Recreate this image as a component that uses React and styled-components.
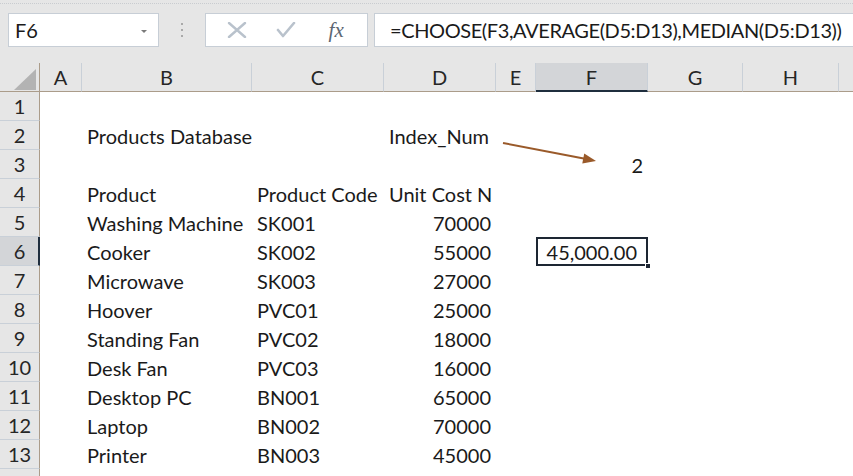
import React from "react";
import styled, { createGlobalStyle, css } from "styled-components";

const GlobalStyle = createGlobalStyle`
  *, *::before, *::after { box-sizing: border-box; }
  html, body { margin: 0; padding: 0; background: #ffffff; overflow: hidden; }
  body { font-family: "Lato", "Open Sans", sans-serif; color: #1a1a1a; }
`;

const FONT = `"Lato", "Open Sans", sans-serif`;
const COLS = "40px 42px 170px 132px 112px 40px 112px 95px 96px 1fr";

const Window = styled.div`
  width: 853px;
  height: 476px;
  overflow: hidden;
  display: flex;
  flex-direction: column;
  background: #ffffff;
`;

const Toolbar = styled.div`
  height: 63px;
  flex: none;
  background: #e6e6e6;
  display: flex;
  flex-direction: column;
  overflow: hidden;
`;

const DottedRule = styled.div`
  margin-top: 3px;
  height: 0;
  border-top: 1px dotted #c9ccd0;
`;

const BarRow = styled.div`
  margin-top: 9px;
  height: 34px;
  display: flex;
  align-items: stretch;
  padding-left: 8px;
`;

const NameBox = styled.div`
  width: 151px;
  flex: none;
  background: #ffffff;
  border: 1px solid #c7ced6;
  display: flex;
  align-items: center;
  justify-content: space-between;
  padding: 0 11px 0 6px;
  font-family: ${FONT};
  font-size: 20px;
  color: #1a1a1a;
`;

const DropArrow = styled.span`
  width: 0;
  height: 0;
  border-left: 3px solid transparent;
  border-right: 3px solid transparent;
  border-top: 3px solid #7a7a7a;
  margin-top: 2px;
`;

const Grip = styled.div`
  width: 46px;
  flex: none;
  display: flex;
  flex-direction: column;
  align-items: center;
  justify-content: center;
  gap: 4px;
`;

const GripDot = styled.span`
  width: 2px;
  height: 2px;
  background: #a9a9a9;
`;

const FuncBox = styled.div`
  width: 163px;
  flex: none;
  background: #ffffff;
  border: 1px solid #c7ced6;
  display: flex;
  align-items: center;
  justify-content: space-around;
  padding: 0 6px;
`;

const IconSlot = styled.span`
  width: 22px;
  height: 22px;
  display: flex;
  align-items: center;
  justify-content: center;
`;

const Fx = styled.span`
  font-family: "Liberation Serif", "DejaVu Serif", serif;
  font-style: italic;
  font-size: 21px;
  color: #5c6672;
  line-height: 1;
`;

const FormulaBox = styled.div`
  flex: 1;
  margin-left: 6px;
  margin-right: -2px;
  background: #ffffff;
  border: 1px solid #c7ced6;
  display: flex;
  align-items: center;
  padding-left: 15px;
  font-family: ${FONT};
  font-size: 20px;
  letter-spacing: -0.4px;
  color: #1a1a1a;
  white-space: nowrap;
  overflow: hidden;
`;

const Sheet = styled.div`
  position: relative;
  flex: 1;
  display: flex;
  flex-direction: column;
  font-family: ${FONT};
  font-size: 20px;
`;

const Row = styled.div`
  display: grid;
  grid-template-columns: ${COLS};
  height: 29px;
  flex: none;
`;

const HeaderRow = styled(Row)`
  background: #e6e6e6;
`;

const Corner = styled.div`
  border-right: 1px solid #ab9c8a;
  border-bottom: 1px solid #ab9c8a;
  display: flex;
  align-items: flex-end;
  justify-content: flex-end;
  padding: 0 3px 1px 0;
`;

const ColHead = styled.div`
  display: flex;
  align-items: center;
  justify-content: center;
  color: #262626;
  border-right: 1px solid #c9d0d8;
  border-bottom: 1px solid #ab9c8a;
  ${(p) =>
    p.$selected &&
    css`
      background: #d3d5d8;
      border-bottom: 2px solid #1f2e3e;
      padding-top: 1px;
    `}
  ${(p) =>
    p.$last &&
    css`
      border-right: none;
    `}
`;

const RowHead = styled.div`
  background: #e6e6e6;
  display: flex;
  align-items: center;
  justify-content: center;
  color: #262626;
  border-bottom: 1px solid #c9d0d8;
  border-right: 1px solid #ab9c8a;
  overflow: hidden;
  ${(p) =>
    p.$selected &&
    css`
      background: #d3d5d8;
      border-right: 2px solid #1f2e3e;
      padding-left: 1px;
    `}
`;

const Cell = styled.div`
  position: relative;
  display: flex;
  align-items: center;
  justify-content: ${(p) => (p.$right ? "flex-end" : "flex-start")};
  padding: ${(p) => (p.$right ? `0 ${p.$pad ?? 5}px 0 0` : "0 0 0 5px")};
  white-space: nowrap;
  color: #1a1a1a;
  ${(p) =>
    p.$selected &&
    css`
      box-shadow: inset 0 0 0 2px #1d2633;
      &::after {
        content: "";
        position: absolute;
        right: -3px;
        bottom: -3px;
        width: 6px;
        height: 6px;
        background: #1d2633;
        border: 1px solid #ffffff;
      }
    `}
`;

const ArrowLayer = styled.svg`
  position: absolute;
  left: 500px;
  top: 75px;
  overflow: visible;
  pointer-events: none;
`;

const columns = ["A", "B", "C", "D", "E", "F", "G", "H", ""];

const products = [
  ["Washing Machine", "SK001", "70000"],
  ["Cooker", "SK002", "55000"],
  ["Microwave", "SK003", "27000"],
  ["Hoover", "PVC01", "25000"],
  ["Standing Fan", "PVC02", "18000"],
  ["Desk Fan", "PVC03", "16000"],
  ["Desktop PC", "BN001", "65000"],
  ["Laptop", "BN002", "70000"],
  ["Printer", "BN003", "45000"],
];

const buildRows = () => {
  const rows = [];
  rows.push({ n: 1, cells: {} });
  rows.push({ n: 2, cells: { B: { v: "Products Database" }, D: { v: "Index_Num" } } });
  rows.push({ n: 3, cells: { F: { v: "2", right: true } } });
  rows.push({
    n: 4,
    cells: { B: { v: "Product" }, C: { v: "Product Code" }, D: { v: "Unit Cost N" } },
  });
  products.forEach(([name, code, cost], i) => {
    const n = 5 + i;
    const cells = { B: { v: name }, C: { v: code }, D: { v: cost, right: true } };
    if (n === 6) cells.F = { v: "45,000.00", right: true, pad: 11, selected: true };
    rows.push({ n, cells });
  });
  return rows;
};

const CrossIcon = () => (
  <svg width="20" height="16" viewBox="0 0 20 16">
    <path d="M2 1 L18 15 M18 1 L2 15" stroke="#b9c2cc" strokeWidth="2.4" strokeLinecap="round" fill="none" />
  </svg>
);

const CheckIcon = () => (
  <svg width="20" height="16" viewBox="0 0 20 16">
    <path d="M2 8 L7 14 L18 1" stroke="#b9c2cc" strokeWidth="2.6" strokeLinecap="round" strokeLinejoin="round" fill="none" />
  </svg>
);

const CornerTriangle = () => (
  <svg width="22" height="21" viewBox="0 0 22 21">
    <polygon points="0,21 22,21 22,0" fill="#b3b3b3" />
  </svg>
);

export default function App() {
  const rows = buildRows();
  return (
    <>
      <GlobalStyle />
      <Window>
        <Toolbar>
          <DottedRule />
          <BarRow>
            <NameBox>
              <span>F6</span>
              <DropArrow />
            </NameBox>
            <Grip>
              <GripDot />
              <GripDot />
              <GripDot />
            </Grip>
            <FuncBox>
              <IconSlot>
                <CrossIcon />
              </IconSlot>
              <IconSlot>
                <CheckIcon />
              </IconSlot>
              <IconSlot>
                <Fx>fx</Fx>
              </IconSlot>
            </FuncBox>
            <FormulaBox>=CHOOSE(F3,AVERAGE(D5:D13),MEDIAN(D5:D13))</FormulaBox>
          </BarRow>
        </Toolbar>
        <Sheet>
          <HeaderRow>
            <Corner>
              <CornerTriangle />
            </Corner>
            {columns.map((c, i) => (
              <ColHead key={i} $selected={c === "F"} $last={c === ""}>
                {c}
              </ColHead>
            ))}
          </HeaderRow>
          {rows.map((r) => (
            <Row key={r.n}>
              <RowHead $selected={r.n === 6}>{r.n}</RowHead>
              {columns.map((c, i) => {
                const cell = r.cells[c];
                return (
                  <Cell
                    key={i}
                    $right={cell?.right}
                    $pad={cell?.pad}
                    $selected={cell?.selected}
                  >
                    {cell?.v}
                  </Cell>
                );
              })}
            </Row>
          ))}
          <Row>
            <RowHead />
          </Row>
          <ArrowLayer width="100" height="30" viewBox="0 0 100 30">
            <line x1="3" y1="5" x2="85" y2="20.7" stroke="#9a5a2a" strokeWidth="2" />
            <polygon points="96,23 84.2,15.4 82.3,25.6" fill="#9a5a2a" />
          </ArrowLayer>
        </Sheet>
      </Window>
    </>
  );
}
